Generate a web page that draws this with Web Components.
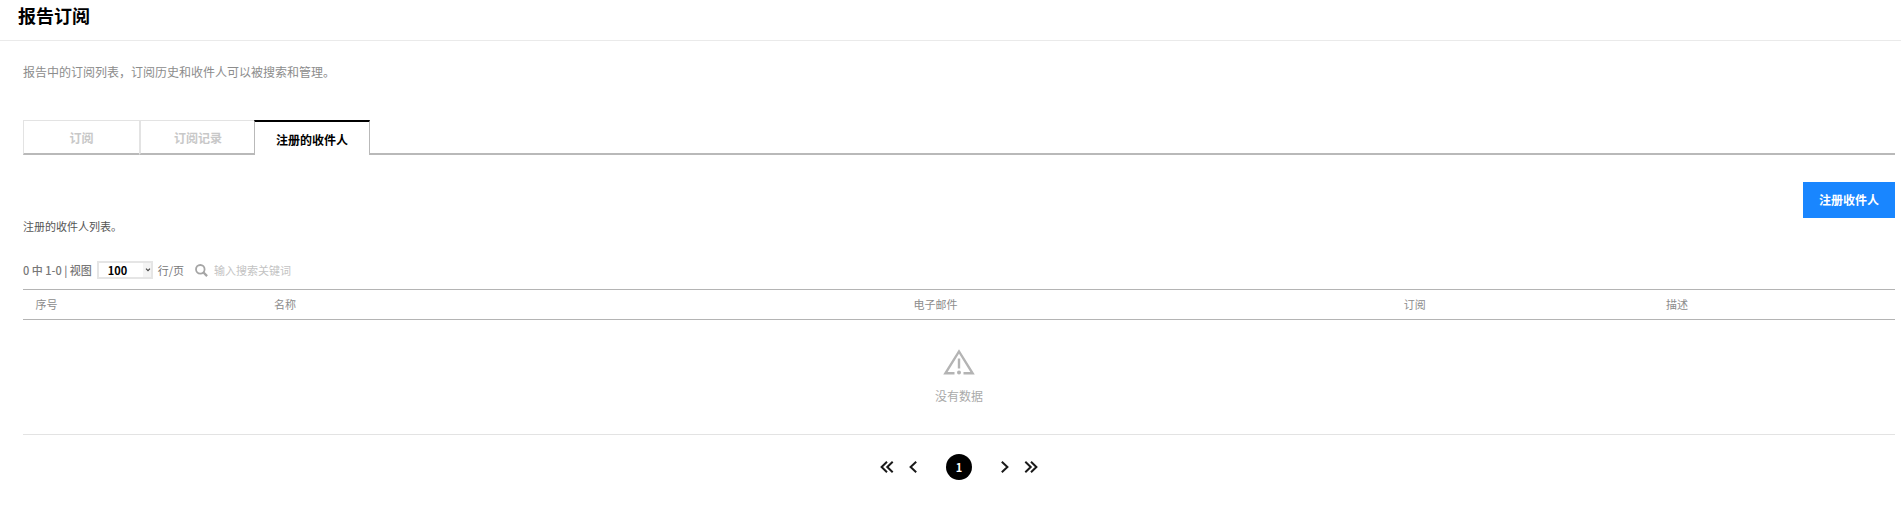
<!DOCTYPE html>
<html lang="zh-CN">
<head>
<meta charset="utf-8">
<meta name="viewport" content="width=device-width, initial-scale=1">
<title>报告订阅</title>
<style>
  body {
    margin: 0;
    background: #fff;
    color: #666;
    font-family: "Noto Sans CJK SC", "Noto Sans", sans-serif;
    font-size: 12px;
    line-height: 20px;
  }
  main { padding: 21px 6px 24px 23px; }
</style>
</head>
<body>

<page-header>报告订阅</page-header>
<main>
  <page-intro>报告中的订阅列表，订阅历史和收件人可以被搜索和管理。</page-intro>
  <tab-bar>
    <tab-item>订阅</tab-item>
    <tab-item>订阅记录</tab-item>
    <tab-item active>注册的收件人</tab-item>
  </tab-bar>
  <section-head>
    注册的收件人列表。
    <action-button slot="action">注册收件人</action-button>
  </section-head>
  <list-toolbar></list-toolbar>
  <recipient-table></recipient-table>
  <page-nav></page-nav>
</main>

<script>
(function () {
  // Attach an open shadow root and fill it
  function render(el, html) {
    var shadow = el.attachShadow({ mode: 'open' });
    shadow.innerHTML = html;
    return shadow;
  }

  class PageHeader extends HTMLElement {
    constructor() {
      super();
      render(this, `
<style>
  :host { display: block; padding: 0 18px 10px; border-bottom: 1px solid #eaeaea; }
  h1 { margin: 0; color: #000; font-size: 18px; line-height: 30px; font-weight: bold; }
</style>
<header><h1><slot></slot></h1></header>
`);
    }
  }

  class PageIntro extends HTMLElement {
    constructor() {
      super();
      render(this, `
<style>
  :host { display: block; color: #8c8c8c; }
  p { margin: 0; }
</style>
<p><slot></slot></p>
`);
    }
  }

  class TabBar extends HTMLElement {
    constructor() {
      super();
      render(this, `
<style>
  :host { display: block; margin-top: 38px; }
  nav { display: flex; }
  /* the line that runs on after the last tab */
  .rest { flex: 1; border-bottom: 2px solid #b9b9b9; }
</style>
<nav><slot></slot><span class="rest"></span></nav>
`);
    }
  }

  class TabItem extends HTMLElement {
    constructor() {
      super();
      render(this, `
<style>
  :host { display: block; width: 116px; }
  /* the active tab covers its neighbour's edge */
  :host([active]) { margin-left: -1px; }
  button {
    box-sizing: border-box; width: 100%; height: 35px; padding: 2px 0 0;
    border: 1px solid #e3e3e3; border-right-width: 0; border-bottom: 2px solid #b9b9b9;
    background: #fff; color: #c8c8c8;
    font: inherit; font-weight: bold; cursor: pointer;
  }
  :host(:not(:first-child)) button { border-left-width: 2px; }
  :host([active]) button {
    border: 1px solid #b9b9b9; border-top: 2px solid #000; border-bottom: 0;
    color: #000;
  }
</style>
<button type="button"><slot></slot></button>
`);
    }
  }

  class SectionHead extends HTMLElement {
    constructor() {
      super();
      render(this, `
<style>
  :host {
    display: flex; justify-content: space-between; align-items: flex-start;
    margin-top: 27px; font-size: 11px; color: #555;
  }
  p { margin: 0; padding-top: 34px; }
</style>
<p><slot></slot></p>
<slot name="action"></slot>
`);
    }
  }

  class ActionButton extends HTMLElement {
    constructor() {
      super();
      render(this, `
<style>
  :host { display: block; font-size: 12px; }
  button {
    display: block; height: 36px; padding: 0 16px; border: 0;
    background: #1986ff; color: #fff;
    font: inherit; font-weight: bold; cursor: pointer;
  }
</style>
<button type="button"><slot></slot></button>
`);
    }
  }

  class ListToolbar extends HTMLElement {
    constructor() {
      super();
      render(this, `
<style>
  :host {
    display: flex; align-items: center; gap: 5px; height: 18px;
    padding: 25px 0 10px; font-size: 11px; color: #777;
  }
  label { white-space: pre; }
  .count { font-weight: 500; }
  .picker { display: flex; position: relative; }
  select {
    appearance: none; box-sizing: border-box; width: 56px; height: 18px;
    margin: 0; padding: 0 0 0 9px; border: 2px solid #e5e5e5; border-radius: 0;
    background: linear-gradient(90deg, #fff 44px, #f4f4f4 44px);
    color: #000; font: bold 11px/14px "Noto Sans CJK SC", sans-serif;
  }
  .caret { position: absolute; right: 2px; top: 7px; pointer-events: none; }
  .search { display: flex; align-items: center; gap: 6px; margin-left: 6px; }
  input {
    width: 160px; height: 18px; padding: 0; border: 0; outline: 0;
    background: none; color: #333; font: inherit;
  }
  input::placeholder { color: #c3c3c3; opacity: 1; }
</style>
<label for="rows" class="count">0 中 1-0 | 视图</label>
<span class="picker">
  <select id="rows">
    <option>15</option>
    <option>50</option>
    <option selected>100</option>
  </select>
  <svg class="caret" width="6" height="4" viewBox="0 0 6 4" aria-hidden="true">
    <path d="M1 .7l2 2 2-2" fill="none" stroke="#444" stroke-width="1.1"/>
  </svg>
</span>
<label for="rows">行/页</label>
<span class="search">
  <svg width="13" height="13" viewBox="0 0 13 13" aria-hidden="true">
    <circle cx="5.3" cy="5.3" r="4.3" fill="none" stroke="#a5a5a5" stroke-width="1.8"/>
    <path d="M8.4 8.4l3.7 3.7" stroke="#a5a5a5" stroke-width="2.2"/>
  </svg>
  <input type="text" aria-label="输入搜索关键词" placeholder="输入搜索关键词">
</span>
`);
    }
  }

  class EmptyState extends HTMLElement {
    constructor() {
      super();
      render(this, `
<style>
  :host {
    display: flex; flex-direction: column; align-items: center; gap: 11px;
    padding: 29px 0 28px; font-size: 12px; color: #aaa;
  }
  svg { display: block; }
</style>
<svg width="32" height="26" viewBox="0 0 32 26" fill="none" stroke="#b4b4b4" stroke-width="2.4" aria-hidden="true">
  <path d="M11.5 24.3H2.4L16 2.4l13.6 21.9h-9.1"/>
  <path d="M16 9.5v10"/>
  <circle cx="16" cy="23.6" r="2" fill="#b4b4b4" stroke="none"/>
</svg>
<slot></slot>
`);
    }
  }

  class RecipientTable extends HTMLElement {
    constructor() {
      super();
      render(this, `
<style>
  :host { display: block; font-size: 11px; color: #8c8c8c; }
  table { width: 100%; table-layout: fixed; border-spacing: 0; }
  th {
    height: 27px; padding: 0 0 2px; text-align: center; font-weight: normal; line-height: 20px;
    border-top: 1px solid #b4b4b4; border-bottom: 1px solid #b4b4b4;
  }
  td { padding: 0; border-bottom: 1px solid #e3e3e3; }
  .no { width: 2.5%; }
  .name { width: 23%; }
  .mail { width: 46.5%; }
  .sub { width: 4.7%; }
</style>
<table>
  <thead>
    <tr>
      <th class="no" scope="col">序号</th>
      <th class="name" scope="col">名称</th>
      <th class="mail" scope="col">电子邮件</th>
      <th class="sub" scope="col">订阅</th>
      <th scope="col">描述</th>
    </tr>
  </thead>
  <tbody>
    <tr><td colspan="5"><empty-state>没有数据</empty-state></td></tr>
  </tbody>
</table>
`);
    }
  }

  class PageNav extends HTMLElement {
    constructor() {
      super();
      render(this, `
<style>
  :host { display: block; padding-top: 19px; }
  nav { display: flex; justify-content: center; align-items: center; }
  button {
    display: flex; align-items: center; justify-content: center;
    width: 26px; height: 26px; padding: 0; border: 0; border-radius: 50%;
    background: none; color: #1a1a1a; cursor: pointer;
  }
  .current { margin: 0 20px; background: #000; color: #fff; font: bold 11px/20px "Noto Sans CJK SC", sans-serif; }
  svg { fill: none; stroke: currentColor; stroke-width: 2; }
</style>
<nav>
  <button type="button" aria-label="第一页"><svg width="14" height="12" viewBox="0 0 14 12"><path d="M7 .8L1.6 6 7 11.2M12.7 .8L7.3 6l5.4 5.2"/></svg></button>
  <button type="button" aria-label="上一页"><svg width="8" height="12" viewBox="0 0 8 12"><path d="M7.2 .8L1.6 6l5.6 5.2"/></svg></button>
  <button type="button" class="current" aria-current="page">1</button>
  <button type="button" aria-label="下一页"><svg width="8" height="12" viewBox="0 0 8 12"><path d="M.8 .8L6.4 6 .8 11.2"/></svg></button>
  <button type="button" aria-label="最后一页"><svg width="14" height="12" viewBox="0 0 14 12"><path d="M1.3 .8L6.7 6l-5.4 5.2M7 .8L12.4 6 7 11.2"/></svg></button>
</nav>
`);
    }
  }

  customElements.define('page-header', PageHeader);
  customElements.define('page-intro', PageIntro);
  customElements.define('tab-bar', TabBar);
  customElements.define('tab-item', TabItem);
  customElements.define('section-head', SectionHead);
  customElements.define('action-button', ActionButton);
  customElements.define('list-toolbar', ListToolbar);
  customElements.define('empty-state', EmptyState);
  customElements.define('recipient-table', RecipientTable);
  customElements.define('page-nav', PageNav);
})();
</script>
</body>
</html>
